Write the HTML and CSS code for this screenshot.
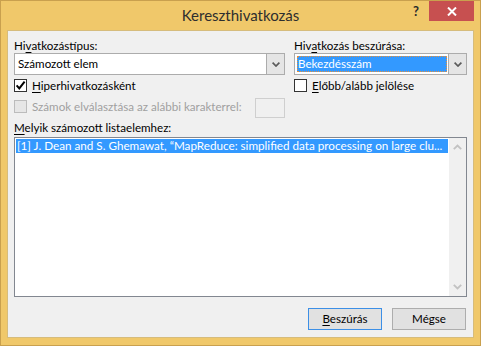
FILE: index.html
```html
<!DOCTYPE html>
<html lang="hu">
<head>
<meta charset="utf-8">
<title>Kereszthivatkozás</title>
<link rel="stylesheet" href="styles.css">
</head>
<body>
<div class="window">
  <div class="titlebar">
    <div></div>
    <div class="title">Kereszthivatkozás</div>
    <div class="controls">
      <span class="help">?</span>
      <span class="close"><svg width="10" height="9" viewBox="0 0 10 9"><path d="M1 0.5 L9 8.5 M9 0.5 L1 8.5" stroke="#fff" stroke-width="2" fill="none"/></svg></span>
    </div>
  </div>
  <div class="client">
    <div class="top">
      <div class="col left">
        <div class="label">Hi<u>v</u>atkozástípus:</div>
        <div class="combo">
          <span class="value">Számozott elem</span>
          <span class="drop"><svg width="8" height="5" viewBox="0 0 8 5"><path d="M0.6 0.6 L4 4 L7.4 0.6" stroke="#5a5a5a" stroke-width="1.7" fill="none"/></svg></span>
        </div>
        <div class="check first">
          <span class="box"><svg width="11" height="11" viewBox="0 0 11 11"><path d="M1.6 5.4 L4.3 8.4 L9.6 1.6" stroke="#000" stroke-width="2" fill="none"/></svg></span>
          <span class="text"><u>H</u>iperhivatkozásként</span>
        </div>
        <div class="sep-row">
          <div class="check disabled">
            <span class="box"></span>
            <span class="text">Számok elválasztása az alábbi karakterrel:</span>
          </div>
          <span class="smallbox"></span>
        </div>
      </div>
      <div class="col right">
        <div class="label">Hiv<u>a</u>tkozás beszúrása:</div>
        <div class="combo focused">
          <span class="value"><span class="sel">Bekezdésszám</span></span>
          <span class="drop"><svg width="8" height="5" viewBox="0 0 8 5"><path d="M0.6 0.6 L4 4 L7.4 0.6" stroke="#5a5a5a" stroke-width="1.7" fill="none"/></svg></span>
        </div>
        <div class="check first">
          <span class="box"></span>
          <span class="text"><u>E</u>lőbb/alább jelölése</span>
        </div>
      </div>
    </div>
    <div class="label list-label"><u>M</u>elyik számozott listaelemhez:</div>
    <div class="listbox">
      <div class="items">
        <div class="item selected">[1] J. Dean and S. Ghemawat, “MapReduce: simplified data processing on large clu...</div>
      </div>
      <div class="scrollbar">
        <svg width="9" height="6" viewBox="0 0 9 6"><path d="M0.8 5.2 L4.5 1.5 L8.2 5.2" stroke="#c2c2c2" stroke-width="1.8" fill="none"/></svg>
        <svg width="9" height="6" viewBox="0 0 9 6"><path d="M0.8 0.8 L4.5 4.5 L8.2 0.8" stroke="#c2c2c2" stroke-width="1.8" fill="none"/></svg>
      </div>
    </div>
    <div class="buttons">
      <div class="btn default"><u>B</u>eszúrás</div>
      <div class="btn">Mégse</div>
    </div>
  </div>
</div>
</body>
</html>
```
FILE: styles.css
```css
* { box-sizing: border-box; }
html, body { margin: 0; padding: 0; }
body {
  width: 481px;
  height: 346px;
  overflow: hidden;
  font-family: Lato, "Liberation Sans", sans-serif;
  font-size: 11.6px;
  color: #000;
}
u { text-decoration: underline; text-underline-offset: 2px; }

.window {
  width: 481px;
  height: 346px;
  background: #f0c86a;
  border: 1px solid #c9a04e;
  display: flex;
  flex-direction: column;
  padding: 0 6px 7px 6px;
}

.titlebar {
  height: 29px;
  display: grid;
  grid-template-columns: 1fr auto 1fr;
  align-items: start;
}
.title {
  font-size: 15px;
  color: #2e2e2e;
  line-height: 20px;
  padding-top: 4px;
}
.controls {
  display: flex;
  justify-content: flex-end;
  align-items: flex-start;
}
.help {
  font-weight: bold;
  font-size: 13px;
  color: #2a2a2a;
  margin-right: 10px;
  margin-top: 3px;
  line-height: 15px;
}
.close {
  width: 45px;
  height: 20px;
  background: #c75050;
  display: flex;
  align-items: center;
  justify-content: center;
}

.client {
  flex: 1;
  background: #f0f0f0;
  border: 1px solid #d6bc7c;
  padding: 7px 6px 0 6px;
  display: flex;
  flex-direction: column;
}

.top {
  display: flex;
  gap: 9px;
}
.col { display: flex; flex-direction: column; }
.left { width: 271px; }
.right { flex: 1; }

.label {
  height: 15px;
  line-height: 15px;
  white-space: nowrap;
}

.combo {
  height: 22px;
  border: 1px solid #acacac;
  background: #fff;
  display: flex;
}
.combo .value {
  flex: 1;
  padding-left: 3px;
  line-height: 20px;
  white-space: nowrap;
  overflow: hidden;
}
.combo .drop {
  width: 18px;
  background: #e5e5e5;
  border-left: 1px solid #acacac;
  display: flex;
  align-items: center;
  justify-content: center;
}
.combo.focused .value {
  padding: 2px 1px 2px 2px;
  display: flex;
}
.combo.focused .sel {
  flex: 1;
  background: #3399ff;
  color: #fff;
  outline: 1px dotted #e8903a;
  outline-offset: -1px;
  line-height: 16px;
  padding-left: 1px;
}

.check {
  display: flex;
  align-items: center;
  height: 15px;
  white-space: nowrap;
}
.check.first { margin-top: 3px; }
.check .box {
  width: 13px;
  height: 13px;
  border: 1px solid #333;
  background: #fff;
  display: flex;
  align-items: center;
  justify-content: center;
  margin-right: 5px;
}
.check .text { line-height: 15px; }
.check.disabled .box {
  border-color: #bcbcbc;
  background: #e6e6e6;
}
.check.disabled .text { color: #a0a0a0; }

.sep-row {
  display: flex;
  justify-content: space-between;
  align-items: flex-start;
  margin-top: 5px;
}
.sep-row .check { margin-top: 1px; }
.smallbox {
  width: 30px;
  height: 20px;
  border: 1px solid #cfcfcf;
  background: #f0f0f0;
}

.list-label { margin-top: 2px; }

.listbox {
  margin-top: 2px;
  height: 160px;
  border: 1px solid #828790;
  background: #fff;
  display: flex;
}
.items {
  flex: 1;
  padding: 1px;
  min-width: 0;
}
.item {
  height: 14px;
  line-height: 13px;
  font-size: 11.7px;
  white-space: nowrap;
  padding-left: 1px;
}
.item.selected {
  background: #3399ff;
  color: #fff;
}
.scrollbar {
  width: 17px;
  background: #f0f0f0;
  display: flex;
  flex-direction: column;
  justify-content: space-between;
  align-items: center;
  padding: 6px 0 6px 0;
}

.buttons {
  margin-top: 11px;
  display: flex;
  justify-content: flex-end;
  gap: 10px;
  padding-right: 1px;
}
.btn {
  width: 74px;
  height: 22px;
  border: 1px solid #adadad;
  background: #e1e1e1;
  text-align: center;
  line-height: 20px;
}
.btn.default {
  border-color: #3c8fe6;
}
```
